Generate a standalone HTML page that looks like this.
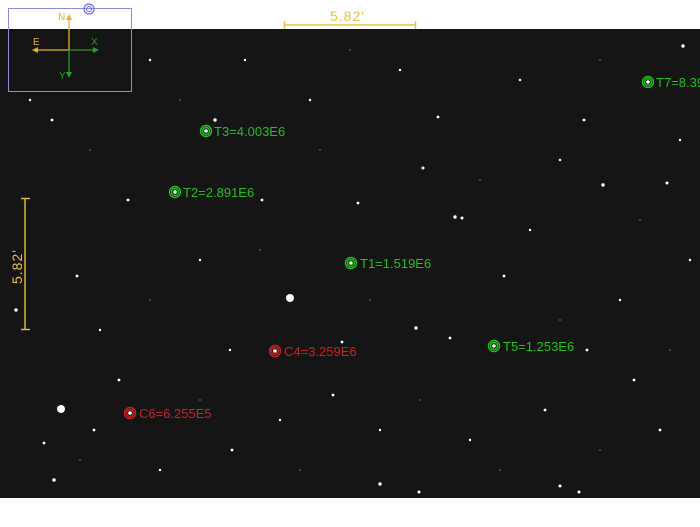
<!DOCTYPE html>
<html><head><style>
html,body{margin:0;padding:0;background:#fff;width:700px;height:527px;overflow:hidden}
svg{display:block}
text{font-family:"Liberation Sans",sans-serif}
</style></head><body>
<svg width="700" height="527" xmlns="http://www.w3.org/2000/svg">
<rect x="0" y="0" width="700" height="527" fill="#fff"/>
<rect x="0" y="29" width="700" height="469" fill="#151515"/>
<g fill="#fff">
<circle cx="290" cy="298" r="4"/><circle cx="61" cy="409" r="4"/>
<circle cx="455" cy="217" r="1.7"/><circle cx="462" cy="218" r="1.5"/><circle cx="423" cy="168" r="1.5"/>
<circle cx="358" cy="203" r="1.4"/><circle cx="416" cy="328" r="1.7"/><circle cx="603" cy="185" r="1.7"/>
<circle cx="667" cy="183" r="1.5"/><circle cx="584" cy="120" r="1.4"/><circle cx="683" cy="46" r="1.7"/>
<circle cx="215" cy="120" r="1.7"/><circle cx="52" cy="120" r="1.4"/><circle cx="77" cy="276" r="1.4"/>
<circle cx="16" cy="310" r="1.7"/><circle cx="504" cy="276" r="1.4"/><circle cx="450" cy="338" r="1.4"/>
<circle cx="634" cy="380" r="1.4"/><circle cx="587" cy="350" r="1.4"/><circle cx="119" cy="380" r="1.4"/>
<circle cx="333" cy="395" r="1.4"/><circle cx="44" cy="443" r="1.4"/><circle cx="54" cy="480" r="1.7"/>
<circle cx="380" cy="484" r="1.7"/><circle cx="419" cy="492" r="1.5"/><circle cx="560" cy="486" r="1.5"/>
<circle cx="579" cy="492" r="1.5"/><circle cx="342" cy="342" r="1.4"/><circle cx="438" cy="117" r="1.4"/>
<circle cx="94" cy="430" r="1.4"/><circle cx="232" cy="450" r="1.4"/><circle cx="128" cy="200" r="1.4"/>
<circle cx="262" cy="200" r="1.4"/><circle cx="545" cy="410" r="1.4"/><circle cx="660" cy="430" r="1.4"/>
<circle cx="30" cy="100" r="1.2"/><circle cx="310" cy="100" r="1.2"/><circle cx="520" cy="80" r="1.2"/>
<circle cx="400" cy="70" r="1.2"/><circle cx="150" cy="60" r="1.2"/><circle cx="245" cy="60" r="1.2"/>
<circle cx="690" cy="260" r="1.2"/><circle cx="620" cy="300" r="1.2"/><circle cx="530" cy="230" r="1.2"/>
<circle cx="200" cy="260" r="1.2"/><circle cx="230" cy="350" r="1.2"/><circle cx="100" cy="330" r="1.2"/>
<circle cx="470" cy="440" r="1.2"/><circle cx="380" cy="430" r="1.2"/><circle cx="160" cy="470" r="1.2"/>
<circle cx="280" cy="420" r="1.2"/><circle cx="680" cy="140" r="1.2"/><circle cx="560" cy="160" r="1.2"/>
</g>
<g fill="#555">
<circle cx="90" cy="150" r="1"/><circle cx="320" cy="150" r="1"/><circle cx="480" cy="180" r="1"/>
<circle cx="640" cy="220" r="1"/><circle cx="260" cy="250" r="1"/><circle cx="150" cy="300" r="1"/>
<circle cx="370" cy="300" r="1"/><circle cx="560" cy="320" r="1"/><circle cx="670" cy="350" r="1"/>
<circle cx="200" cy="400" r="1"/><circle cx="420" cy="400" r="1"/><circle cx="600" cy="450" r="1"/>
<circle cx="80" cy="460" r="1"/><circle cx="300" cy="470" r="1"/><circle cx="500" cy="470" r="1"/>
<circle cx="350" cy="50" r="1"/><circle cx="600" cy="60" r="1"/><circle cx="180" cy="100" r="1"/>
</g>
<rect x="8.5" y="8.5" width="123" height="83" fill="none" stroke="#8a8ad8" stroke-width="1"/>
<circle cx="89" cy="9" r="5" fill="none" stroke="#6a6af0" stroke-width="1.2"/>
<circle cx="89" cy="9" r="2.5" fill="none" stroke="#6a6af0" stroke-width="1"/>
<g stroke="#e0b030" stroke-width="1.3" fill="#e0b030">
<line x1="69" y1="50" x2="69" y2="18"/><polygon points="66,20 72,20 69,14" stroke="none"/>
<line x1="69" y1="50" x2="36" y2="50"/><polygon points="38,47 38,53 32,50" stroke="none"/>
</g>
<g stroke="#2a9a2a" stroke-width="1.3" fill="#2a9a2a">
<line x1="69" y1="50" x2="95" y2="50"/><polygon points="93,47 93,53 99,50" stroke="none"/>
<line x1="69" y1="50" x2="69" y2="74"/><polygon points="66,72 72,72 69,78" stroke="none"/>
</g>
<text x="58" y="20" font-size="10" fill="#e0b030">N</text>
<text x="33" y="45" font-size="10" fill="#e0b030">E</text>
<text x="91" y="45" font-size="10" fill="#2a9a2a">X</text>
<text x="59" y="79" font-size="10" fill="#2a9a2a">Y</text>
<g stroke="#e8c040" stroke-width="1.4">
<line x1="284" y1="25" x2="416" y2="25"/><line x1="284.5" y1="21" x2="284.5" y2="29"/><line x1="415.5" y1="21" x2="415.5" y2="29"/>
<line x1="25" y1="198" x2="25" y2="330"/><line x1="21" y1="198.5" x2="30" y2="198.5"/><line x1="21" y1="329.5" x2="30" y2="329.5"/>
</g>
<text x="330" y="21" font-size="14" fill="#e8c040" font-family="Liberation Mono,monospace" letter-spacing="1">5.82'</text>
<text transform="translate(22,284) rotate(-90)" font-size="14" fill="#e8c040" font-family="Liberation Mono,monospace" letter-spacing="1">5.82'</text>
<g fill="none" stroke="#22c022" stroke-width="1.4">
<circle cx="206" cy="131" r="5.5"/><circle cx="206" cy="131" r="3.5"/>
<circle cx="175" cy="192" r="5.5"/><circle cx="175" cy="192" r="3.5"/>
<circle cx="351" cy="263" r="5.5"/><circle cx="351" cy="263" r="3.5"/>
<circle cx="494" cy="346" r="5.5"/><circle cx="494" cy="346" r="3.5"/>
<circle cx="648" cy="82" r="5.5"/><circle cx="648" cy="82" r="3.5"/>
</g>
<g fill="none" stroke="#d02020" stroke-width="1.4">
<circle cx="275" cy="351" r="5.5"/><circle cx="275" cy="351" r="3.5"/>
<circle cx="130" cy="413" r="5.5"/><circle cx="130" cy="413" r="3.5"/>
</g>
<g fill="#fff">
<circle cx="206" cy="131" r="1.8"/><circle cx="175" cy="192" r="1.8"/><circle cx="351" cy="263" r="1.8"/>
<circle cx="494" cy="346" r="1.8"/><circle cx="648" cy="82" r="1.8"/><circle cx="275" cy="351" r="1.8"/><circle cx="130" cy="413" r="1.8"/>
</g>
<g font-size="13" fill="#22c022">
<text x="214" y="136">T3=4.003E6</text>
<text x="183" y="197">T2=2.891E6</text>
<text x="360" y="268">T1=1.519E6</text>
<text x="503" y="351">T5=1.253E6</text>
<text x="656" y="87">T7=8.39</text>
</g>
<g font-size="13" fill="#d02020">
<text x="284" y="356">C4=3.259E6</text>
<text x="139" y="418">C6=6.255E5</text>
</g>
</svg>
</body></html>
